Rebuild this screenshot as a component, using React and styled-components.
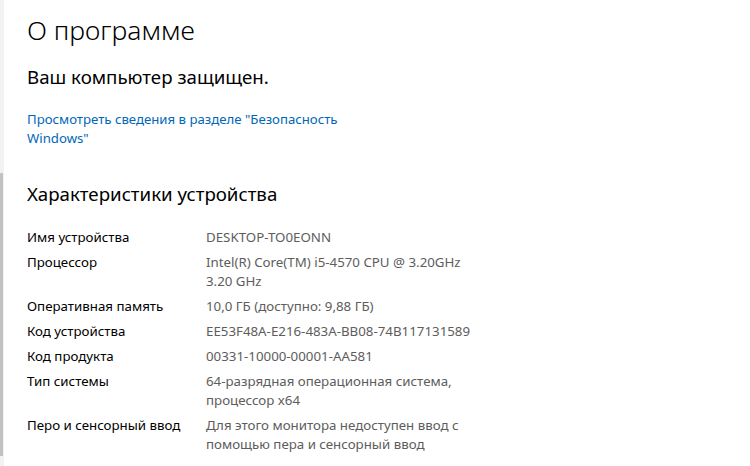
import React from "react";
import styled, { createGlobalStyle } from "styled-components";

const GlobalStyle = createGlobalStyle`
  html, body {
    margin: 0;
    padding: 0;
    background: #fff;
  }
  body {
    font-family: "Noto Sans", "Open Sans", sans-serif;
    color: #000;
  }
`;

const specs = [
  { label: "Имя устройства", value: "DESKTOP-TO0EONN" },
  { label: "Процессор", value: "Intel(R) Core(TM) i5-4570 CPU @ 3.20GHz\n3.20 GHz" },
  { label: "Оперативная память", value: "10,0 ГБ (доступно: 9,88 ГБ)" },
  { label: "Код устройства", value: "EE53F48A-E216-483A-BB08-74B117131589" },
  { label: "Код продукта", value: "00331-10000-00001-AA581" },
  { label: "Тип системы", value: "64-разрядная операционная система,\nпроцессор x64" },
  {
    label: "Перо и сенсорный ввод",
    value: "Для этого монитора недоступен ввод с\nпомощью пера и сенсорный ввод",
  },
];

const App = () => {
  return (
    <Window>
      <GlobalStyle />
      <ScrollTrack>
        <ScrollThumb />
      </ScrollTrack>
      <Content>
        <Title>О программе</Title>
        <Status>Ваш компьютер защищен.</Status>
        <Link href="#">
          Просмотреть сведения в разделе "Безопасность
          <br />
          Windows"
        </Link>
        <Section>Характеристики устройства</Section>
        <SpecList>
          {specs.map((s) => (
            <SpecRow key={s.label}>
              <Label>{s.label}</Label>
              <Value>{s.value}</Value>
            </SpecRow>
          ))}
        </SpecList>
      </Content>
    </Window>
  );
};

const Window = styled.div`
  width: 750px;
  height: 466px;
  display: flex;
  overflow: hidden;
  background: #fff;
`;

const ScrollTrack = styled.div`
  width: 4px;
  flex-shrink: 0;
  background: #f2f2f2;
  display: flex;
  flex-direction: column;
  padding-top: 173px;
  padding-bottom: 10px;
  box-sizing: border-box;
`;

const ScrollThumb = styled.div`
  width: 3px;
  flex: 1;
  background: #c2c2c2;
`;

const Content = styled.div`
  flex: 1;
  padding: 11px 0 0 23px;
  display: flex;
  flex-direction: column;
  align-items: flex-start;
`;

const Title = styled.h1`
  margin: 0;
  font-size: 26.5px;
  font-weight: 300;
  line-height: 38px;
  color: #000;
`;

const Status = styled.div`
  margin-top: 15px;
  font-size: 18.7px;
  line-height: 26px;
  color: #000;
`;

const Link = styled.a`
  margin-top: 20px;
  font-size: 13.2px;
  line-height: 19px;
  color: #0067b8;
  text-decoration: none;
`;

const Section = styled.h2`
  margin: 33px 0 0;
  font-size: 18.7px;
  font-weight: 400;
  line-height: 26px;
  color: #000;
`;

const SpecList = styled.div`
  margin-top: 21px;
  display: flex;
  flex-direction: column;
  gap: 6px;
`;

const SpecRow = styled.div`
  display: grid;
  grid-template-columns: 179px auto;
  font-size: 13.3px;
  line-height: 19px;
`;

const Label = styled.div`
  color: #000;
`;

const Value = styled.div`
  color: #5d5d5d;
  white-space: pre-line;
`;

export default App;
